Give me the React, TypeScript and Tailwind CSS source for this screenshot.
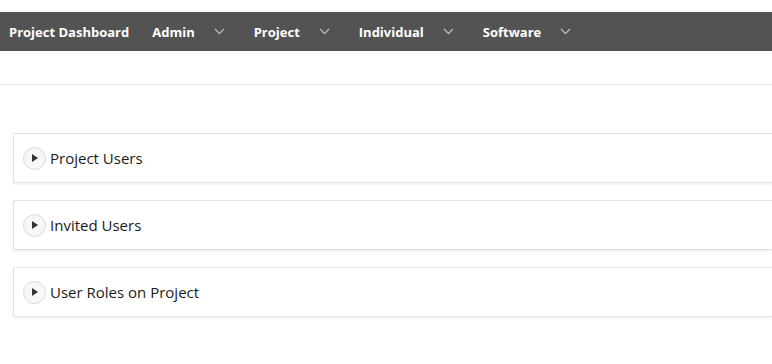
import React from 'react';

const navItems = ['Admin', 'Project', 'Individual', 'Software'];
const sections = ['Project Users', 'Invited Users', 'User Roles on Project'];

const Chevron: React.FC = () => (
  <svg width="11" height="7" viewBox="0 0 11 7" className="ml-[19px] mr-[29px] mt-[-2px]">
    <path d="M1 1 L5.5 5.5 L10 1" fill="none" stroke="#b8b8b8" strokeWidth="1.3" />
  </svg>
);

const App: React.FC = () => {
  return (
    <div className="w-[772px] h-[364px] overflow-hidden bg-white font-['Open_Sans','Noto_Sans',sans-serif]">
      <div className="h-[12px]" />
      {/* top nav */}
      <nav className="h-[39px] bg-[#535353] flex items-center pl-[9px] pt-[2px] text-white text-[13px] font-bold">
        <span className="mr-[23px]">Project Dashboard</span>
        {navItems.map((item) => (
          <div key={item} className="flex items-center">
            <span>{item}</span>
            <Chevron />
          </div>
        ))}
      </nav>
      <div className="h-[33px]" />
      <div className="h-px bg-[#ebebeb]" />

      {/* collapsible regions */}
      <div className="pl-[13px] pt-[48px] flex flex-col gap-[17px]">
        {sections.map((title) => (
          <div
            key={title}
            className="h-[50px] border border-r-0 border-[#e2e2e2] rounded-l-[2px] shadow-[0_2px_2px_rgba(0,0,0,0.05)] flex items-center pl-[9px] bg-white"
          >
            <div className="w-[23px] h-[23px] rounded-full border border-[#dadada] bg-[#f7f7f7] flex items-center justify-center">
              <svg width="6" height="8" viewBox="0 0 6 8" className="ml-[1px]">
                <path d="M0 0 L6 4 L0 8 Z" fill="#333" />
              </svg>
            </div>
            <span className="ml-[4px] text-[15px] text-[#1a1a1a]">{title}</span>
          </div>
        ))}
      </div>
    </div>
  );
};

export default App;
